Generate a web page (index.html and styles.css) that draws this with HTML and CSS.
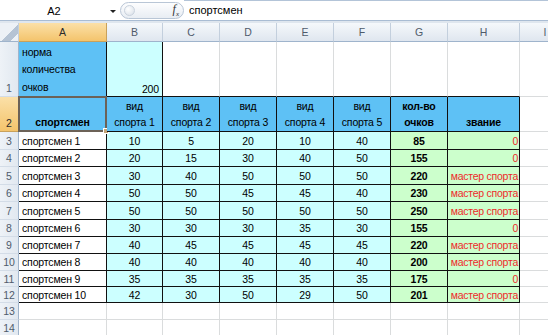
FILE: index.html
```html
<!DOCTYPE html>
<html lang="ru">

<head>
  <meta charset="UTF-8">
  <title>спортсмены</title>
  <link rel="stylesheet" href="styles.css">
</head>

<body>
  <div class="formula-bar">
    <div class="name-box">A2</div>
    <div class="name-arrow"></div>
    <div class="pill">
      <span class="pill-knob"></span>
      <span class="fx">f<sub>x</sub></span>
    </div>
    <div class="formula-input">спортсмен</div>
  </div>
  <div class="bar-gap"></div>

  <div class="sheet">
    <!-- column headers -->
    <div class="corner"></div>
    <div class="ch active">A</div>
    <div class="ch">B</div>
    <div class="ch">C</div>
    <div class="ch">D</div>
    <div class="ch">E</div>
    <div class="ch">F</div>
    <div class="ch">G</div>
    <div class="ch">H</div>
    <div class="ch last">I</div>

    <!-- row 1 -->
    <div class="rh bottom">1</div>
    <div class="c blue bd wrap">норма количества очков</div>
    <div class="c cyan bd num-r bottom">200</div>
    <div class="c bb"></div>
    <div class="c bb"></div>
    <div class="c bb"></div>
    <div class="c bb"></div>
    <div class="c bb"></div>
    <div class="c bb"></div>
    <div class="c"></div>

    <!-- row 2 -->
    <div class="rh active bottom">2</div>
    <div class="c blue bd head bold"><span>спортсмен</span><span class="sel"><span class="handle"></span></span></div>
    <div class="c blue bd head">вид<br>спорта 1</div>
    <div class="c blue bd head">вид<br>спорта 2</div>
    <div class="c blue bd head">вид<br>спорта 3</div>
    <div class="c blue bd head">вид<br>спорта 4</div>
    <div class="c blue bd head">вид<br>спорта 5</div>
    <div class="c blue bd head bold">кол-во<br>очков</div>
    <div class="c blue bd head bold">звание</div>
    <div class="c"></div>

    <!-- rows 3-12 -->
    <div class="rh">3</div>
    <div class="c bd">спортсмен 1</div>
    <div class="c cyan bd num">10</div>
    <div class="c cyan bd num">5</div>
    <div class="c cyan bd num">20</div>
    <div class="c cyan bd num">10</div>
    <div class="c cyan bd num">40</div>
    <div class="c green bd num bold">85</div>
    <div class="c green bd rank">0</div>
    <div class="c"></div>

    <div class="rh">4</div>
    <div class="c bd">спортсмен 2</div>
    <div class="c cyan bd num">20</div>
    <div class="c cyan bd num">15</div>
    <div class="c cyan bd num">30</div>
    <div class="c cyan bd num">40</div>
    <div class="c cyan bd num">50</div>
    <div class="c green bd num bold">155</div>
    <div class="c green bd rank">0</div>
    <div class="c"></div>

    <div class="rh">5</div>
    <div class="c bd">спортсмен 3</div>
    <div class="c cyan bd num">30</div>
    <div class="c cyan bd num">40</div>
    <div class="c cyan bd num">50</div>
    <div class="c cyan bd num">50</div>
    <div class="c cyan bd num">50</div>
    <div class="c green bd num bold">220</div>
    <div class="c green bd rank">мастер спорта</div>
    <div class="c"></div>

    <div class="rh">6</div>
    <div class="c bd">спортсмен 4</div>
    <div class="c cyan bd num">50</div>
    <div class="c cyan bd num">50</div>
    <div class="c cyan bd num">45</div>
    <div class="c cyan bd num">45</div>
    <div class="c cyan bd num">40</div>
    <div class="c green bd num bold">230</div>
    <div class="c green bd rank">мастер спорта</div>
    <div class="c"></div>

    <div class="rh">7</div>
    <div class="c bd">спортсмен 5</div>
    <div class="c cyan bd num">50</div>
    <div class="c cyan bd num">50</div>
    <div class="c cyan bd num">50</div>
    <div class="c cyan bd num">50</div>
    <div class="c cyan bd num">50</div>
    <div class="c green bd num bold">250</div>
    <div class="c green bd rank">мастер спорта</div>
    <div class="c"></div>

    <div class="rh">8</div>
    <div class="c bd">спортсмен 6</div>
    <div class="c cyan bd num">30</div>
    <div class="c cyan bd num">30</div>
    <div class="c cyan bd num">30</div>
    <div class="c cyan bd num">35</div>
    <div class="c cyan bd num">30</div>
    <div class="c green bd num bold">155</div>
    <div class="c green bd rank">0</div>
    <div class="c"></div>

    <div class="rh">9</div>
    <div class="c bd">спортсмен 7</div>
    <div class="c cyan bd num">40</div>
    <div class="c cyan bd num">45</div>
    <div class="c cyan bd num">45</div>
    <div class="c cyan bd num">45</div>
    <div class="c cyan bd num">45</div>
    <div class="c green bd num bold">220</div>
    <div class="c green bd rank">мастер спорта</div>
    <div class="c"></div>

    <div class="rh">10</div>
    <div class="c bd">спортсмен 8</div>
    <div class="c cyan bd num">40</div>
    <div class="c cyan bd num">40</div>
    <div class="c cyan bd num">40</div>
    <div class="c cyan bd num">40</div>
    <div class="c cyan bd num">40</div>
    <div class="c green bd num bold">200</div>
    <div class="c green bd rank">мастер спорта</div>
    <div class="c"></div>

    <div class="rh">11</div>
    <div class="c bd">спортсмен 9</div>
    <div class="c cyan bd num">35</div>
    <div class="c cyan bd num">35</div>
    <div class="c cyan bd num">35</div>
    <div class="c cyan bd num">35</div>
    <div class="c cyan bd num">35</div>
    <div class="c green bd num bold">175</div>
    <div class="c green bd rank">0</div>
    <div class="c"></div>

    <div class="rh">12</div>
    <div class="c bd">спортсмен 10</div>
    <div class="c cyan bd num">42</div>
    <div class="c cyan bd num">30</div>
    <div class="c cyan bd num">50</div>
    <div class="c cyan bd num">29</div>
    <div class="c cyan bd num">50</div>
    <div class="c green bd num bold">201</div>
    <div class="c green bd rank">мастер спорта</div>
    <div class="c"></div>

    <!-- empty rows -->
    <div class="rh">13</div>
    <div class="c"></div>
    <div class="c"></div>
    <div class="c"></div>
    <div class="c"></div>
    <div class="c"></div>
    <div class="c"></div>
    <div class="c"></div>
    <div class="c"></div>
    <div class="c"></div>

    <div class="rh">14</div>
    <div class="c"></div>
    <div class="c"></div>
    <div class="c"></div>
    <div class="c"></div>
    <div class="c"></div>
    <div class="c"></div>
    <div class="c"></div>
    <div class="c"></div>
    <div class="c"></div>
  </div>
</body>

</html>
```

FILE: styles.css
```css
* {
  margin: 0;
  padding: 0;
  box-sizing: border-box;
}

html,
body {
  width: 548px;
  height: 335px;
  overflow: hidden;
  background: #fff;
  font-family: "Liberation Sans", Arial, sans-serif;
  font-size: 11px;
  color: #000;
}

/* formula bar */

.formula-bar {
  display: flex;
  align-items: center;
  height: 21px;
  background: #fff;
  border-bottom: 1px solid #a9bcd3;
}

.name-box {
  width: 108px;
  text-align: center;
  font-size: 11px;
  padding-top: 1px;
}

.name-arrow {
  width: 0;
  height: 0;
  margin: 2px 4px 0 2px;
  border-left: 3px solid transparent;
  border-right: 3px solid transparent;
  border-top: 3px solid #222;
}

.pill {
  display: flex;
  align-items: center;
  justify-content: space-between;
  width: 64px;
  height: 17px;
  padding: 0 4px 0 3px;
  border: 1px solid #b9c6d6;
  border-radius: 9px;
  background: linear-gradient(#fdfdfe, #e8edf3);
}

.pill-knob {
  width: 11px;
  height: 11px;
  border-radius: 50%;
  border: 1px solid #c9d2dd;
  background: radial-gradient(circle at 35% 35%, #fff, #d7dee7);
}

.fx {
  font-family: "Liberation Serif", serif;
  font-style: italic;
  font-size: 12px;
  color: #333;
}

.fx sub {
  font-size: 7px;
}

.formula-input {
  flex: 1;
  height: 100%;
  padding: 3px 0 0 5px;
  font-size: 11px;
  border-top: 1px solid #b3c4d8;
}

.bar-gap {
  height: 2px;
  background: #dfe6ee;
}

/* sheet grid */

.sheet {
  display: grid;
  width: 570px;
  grid-template-columns: 19px 88px 56px 57px 57px 57px 57px 57px 72px 50px;
  grid-template-rows: 19px 55px 35px 18px 17px 18px 17px 18px 17px 17px 17px 16px 16px 17px 17px;
  font-size: 10.5px;
}

.corner,
.ch,
.rh {
  color: #4f5b6b;
  border-right: 1px solid #c3cfdd;
  border-bottom: 1px solid #9fb4cc;
}

.corner {
  background: linear-gradient(135deg, #edf1f6 0 55%, #b5c3d4 55% 80%, #edf1f6 80%);
}

.ch {
  display: flex;
  align-items: center;
  justify-content: center;
  background: linear-gradient(#f5f8fb, #dfe6ef);
}

.ch.last {
  border-right: none;
}

.rh {
  display: flex;
  align-items: center;
  justify-content: center;
  background: linear-gradient(90deg, #eef2f7, #e1e8f0);
  border-right-color: #9fb4cc;
  border-bottom-color: #d3dce7;
}

.rh.bottom {
  align-items: flex-end;
  padding-bottom: 2px;
}

.ch.active,
.rh.active {
  color: #2b2b2b;
  background: linear-gradient(#fbe0a8, #f4c46c);
  border-color: #c9a15a;
}

.c {
  display: flex;
  align-items: center;
  padding: 0 3px;
  white-space: nowrap;
  overflow: hidden;
  letter-spacing: -0.15px;
  border-right: 1px solid #dadcdd;
  border-bottom: 1px solid #dadcdd;
}

.bd {
  border-right-color: #111;
  border-bottom-color: #111;
}

.bb {
  border-bottom-color: #111;
}

.blue {
  background: #5ec1f5;
}

.cyan {
  background: #ccffff;
}

.green {
  background: #ccffcc;
}

.bold {
  font-weight: bold;
}

.num {
  justify-content: center;
}

.num-r {
  justify-content: flex-end;
}

.bottom {
  align-items: flex-end;
  padding-bottom: 1px;
}

.wrap {
  white-space: normal;
  align-items: flex-end;
  line-height: 17.5px;
  padding-bottom: 0;
}

.head {
  position: relative;
  justify-content: center;
  align-items: flex-end;
  text-align: center;
  line-height: 16px;
  padding-bottom: 1px;
  overflow: visible;
}

.rank {
  justify-content: flex-end;
  color: #ee2a2a;
  padding: 0 1px 0 0;
  letter-spacing: -0.25px;
}

/* active cell frame */

.sel {
  position: absolute;
  left: -1px;
  top: -1px;
  right: -1px;
  bottom: -1px;
  border: 2px solid #6c6257;
}

.handle {
  position: absolute;
  right: -4px;
  bottom: -4px;
  width: 6px;
  height: 6px;
  background: #c4a577;
  border: 1px solid #fff;
}
```
